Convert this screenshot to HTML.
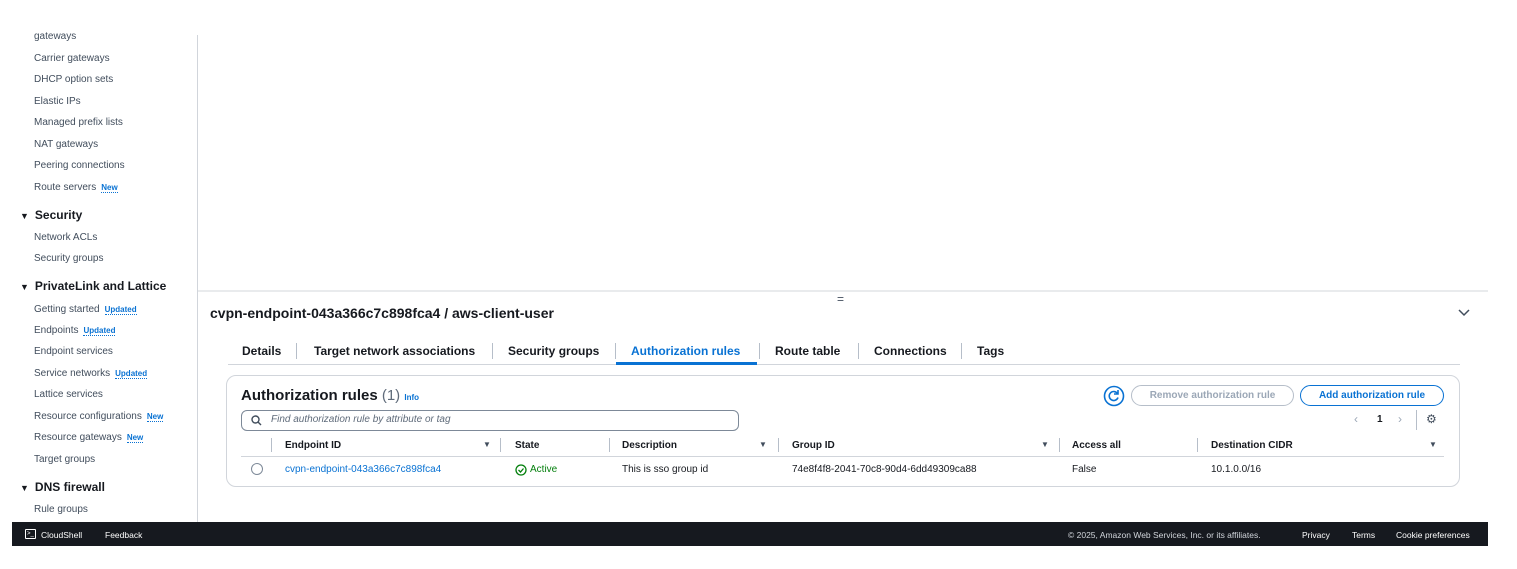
<!DOCTYPE html>
<html><head><meta charset="utf-8"><style>
*{box-sizing:border-box;margin:0;padding:0}
body{width:1517px;height:569px;background:#fff;font-family:"Liberation Sans",sans-serif;color:#16191f;position:relative;overflow:hidden}
.a{position:absolute;white-space:nowrap}
.si{font-size:10px;color:#414d5c;left:34px}
.sh{font-size:12px;font-weight:bold;left:20px;color:#16191f}
.sh i{font-style:normal;font-size:9px;margin-right:6px}
.bd{font-size:8px;font-weight:bold;color:#0972d3;border-bottom:1px dotted #0972d3;margin-left:5px}
.tab{font-size:12px;font-weight:bold;color:#16191f;top:344px}
.th{font-size:10px;font-weight:bold;top:440px;color:#16191f}
.td{font-size:10px;top:464px;color:#16191f}
.sep{position:absolute;width:1px;background:#b6bec9}
.f{font-size:8.5px;color:#fff;top:530px}
.btn{display:flex;align-items:center;justify-content:center;font-size:10px;font-weight:bold;border-radius:11px;height:21px;top:385px}
</style></head><body>
<div class="a si" style="top:31px">gateways</div>
<div class="a si" style="top:53px">Carrier gateways</div>
<div class="a si" style="top:74px">DHCP option sets</div>
<div class="a si" style="top:96px">Elastic IPs</div>
<div class="a si" style="top:117px">Managed prefix lists</div>
<div class="a si" style="top:139px">NAT gateways</div>
<div class="a si" style="top:160px">Peering connections</div>
<div class="a si" style="top:182px">Route servers<span class="bd">New</span></div>
<div class="a sh" style="top:208px"><i>▼</i>Security</div>
<div class="a si" style="top:232px">Network ACLs</div>
<div class="a si" style="top:253px">Security groups</div>
<div class="a sh" style="top:279px"><i>▼</i>PrivateLink and Lattice</div>
<div class="a si" style="top:304px">Getting started<span class="bd">Updated</span></div>
<div class="a si" style="top:325px">Endpoints<span class="bd">Updated</span></div>
<div class="a si" style="top:346px">Endpoint services</div>
<div class="a si" style="top:368px">Service networks<span class="bd">Updated</span></div>
<div class="a si" style="top:389px">Lattice services</div>
<div class="a si" style="top:411px">Resource configurations<span class="bd">New</span></div>
<div class="a si" style="top:432px">Resource gateways<span class="bd">New</span></div>
<div class="a si" style="top:454px">Target groups</div>
<div class="a sh" style="top:480px"><i>▼</i>DNS firewall</div>
<div class="a si" style="top:504px">Rule groups</div>
<div class="a" style="left:197px;top:35px;width:1px;height:487px;background:#d1d5db"></div>
<div class="a" style="left:198px;top:290px;width:1290px;height:2px;background:#e9ebed"></div>
<div class="a" style="left:837px;top:292px;font-size:12px;color:#414d5c">=</div>
<div class="a" style="left:210px;top:305px;font-size:14px;font-weight:bold">cvpn-endpoint-043a366c7c898fca4 / aws-client-user</div>
<svg class="a" style="left:1458px;top:309px" width="12" height="8"><path d="M1 1l5 5 5-5" stroke="#414d5c" stroke-width="1.5" fill="none"/></svg>
<div class="a tab" style="left:242px">Details</div>
<div class="a tab" style="left:314px">Target network associations</div>
<div class="a tab" style="left:508px">Security groups</div>
<div class="a tab" style="left:631px;color:#0972d3">Authorization rules</div>
<div class="a tab" style="left:775px">Route table</div>
<div class="a tab" style="left:874px">Connections</div>
<div class="a tab" style="left:977px">Tags</div>
<div class="sep" style="left:296px;top:343px;height:16px"></div>
<div class="sep" style="left:492px;top:343px;height:16px"></div>
<div class="sep" style="left:615px;top:343px;height:16px"></div>
<div class="sep" style="left:759px;top:343px;height:16px"></div>
<div class="sep" style="left:858px;top:343px;height:16px"></div>
<div class="sep" style="left:961px;top:343px;height:16px"></div>
<div class="a" style="left:228px;top:364px;width:1232px;height:1px;background:#d1d5db"></div>
<div class="a" style="left:616px;top:362px;width:141px;height:3px;background:#0972d3"></div>
<div class="a" style="left:226px;top:375px;width:1234px;height:112px;border:1px solid #d1d5db;border-radius:10px"></div>
<div class="a" style="left:241px;top:387px;font-size:15px;font-weight:bold">Authorization rules <span style="font-weight:normal;color:#5f6b7a">(1)</span> <span style="font-size:8px;color:#0972d3">Info</span></div>
<div class="a" style="left:241px;top:410px;width:498px;height:21px;border:1.5px solid #7d8998;border-radius:6px"></div>
<svg class="a" style="left:251px;top:415px" width="11" height="11"><circle cx="4.5" cy="4.5" r="3.5" stroke="#414d5c" stroke-width="1.4" fill="none"/><path d="M7 7l3 3" stroke="#414d5c" stroke-width="1.4"/></svg>
<div class="a" style="left:271px;top:414px;font-size:10px;font-style:italic;color:#5f6b7a">Find authorization rule by attribute or tag</div>
<svg class="a" style="left:1103px;top:385px" width="22" height="22"><circle cx="11" cy="11" r="9.5" stroke="#0972d3" stroke-width="1.6" fill="none"/><path d="M14.5 8.5a4.5 4.5 0 1 0 0.5 4" stroke="#0972d3" stroke-width="1.6" fill="none"/><path d="M15 5v4h-4" stroke="#0972d3" stroke-width="1.6" fill="none"/></svg>
<div class="a btn" style="left:1131px;width:163px;border:1.5px solid #b6bec9;color:#9ba7b6">Remove authorization rule</div>
<div class="a btn" style="left:1300px;width:144px;border:1.5px solid #0972d3;color:#0972d3">Add authorization rule</div>
<div class="a" style="left:1354px;top:412px;font-size:12px;color:#9ba7b6">‹</div>
<div class="a" style="left:1377px;top:414px;font-size:10px;font-weight:bold">1</div>
<div class="a" style="left:1398px;top:412px;font-size:12px;color:#9ba7b6">›</div>
<div class="sep" style="left:1416px;top:410px;height:20px"></div>
<div class="a" style="left:1426px;top:412px;font-size:12px;color:#414d5c">⚙</div>
<div class="a" style="left:241px;top:456px;width:1203px;height:1px;background:#d1d5db"></div>
<div class="sep" style="left:271px;top:438px;height:14px"></div>
<div class="a th" style="left:285px">Endpoint ID</div><div class="a th" style="left:483px;font-size:8px;color:#414d5c">▼</div>
<div class="sep" style="left:500px;top:438px;height:14px"></div>
<div class="a th" style="left:515px">State</div>
<div class="sep" style="left:609px;top:438px;height:14px"></div>
<div class="a th" style="left:622px">Description</div><div class="a th" style="left:759px;font-size:8px;color:#414d5c">▼</div>
<div class="sep" style="left:778px;top:438px;height:14px"></div>
<div class="a th" style="left:792px">Group ID</div><div class="a th" style="left:1041px;font-size:8px;color:#414d5c">▼</div>
<div class="sep" style="left:1059px;top:438px;height:14px"></div>
<div class="a th" style="left:1072px">Access all</div>
<div class="sep" style="left:1197px;top:438px;height:14px"></div>
<div class="a th" style="left:1211px">Destination CIDR</div><div class="a th" style="left:1429px;font-size:8px;color:#414d5c">▼</div>
<div class="a" style="left:251px;top:463px;width:12px;height:12px;border:1.3px solid #7d8998;border-radius:50%"></div>
<div class="a td" style="left:285px;color:#0972d3">cvpn-endpoint-043a366c7c898fca4</div>
<svg class="a" style="left:515px;top:464px" width="12" height="12"><circle cx="6" cy="6" r="5" stroke="#037f0c" stroke-width="1.3" fill="none"/><path d="M3.5 6l2 2 3-3.5" stroke="#037f0c" stroke-width="1.3" fill="none"/></svg>
<div class="a td" style="left:530px;color:#037f0c">Active</div>
<div class="a td" style="left:622px">This is sso group id</div>
<div class="a td" style="left:792px">74e8f4f8-2041-70c8-90d4-6dd49309ca88</div>
<div class="a td" style="left:1072px">False</div>
<div class="a td" style="left:1211px">10.1.0.0/16</div>
<div class="a" style="left:12px;top:522px;width:1476px;height:24px;background:#16191f"></div>
<div class="a" style="left:25px;top:529px;width:11px;height:10px;border:1px solid #fff;border-radius:1px;font-size:6px;color:#fff;line-height:8px;padding-left:1px">&gt;_</div>
<div class="a f" style="left:41px">CloudShell</div>
<div class="a f" style="left:105px">Feedback</div>
<div class="a f" style="left:1068px;color:#d1d5db">© 2025, Amazon Web Services, Inc. or its affiliates.</div>
<div class="a f" style="left:1302px">Privacy</div>
<div class="a f" style="left:1352px">Terms</div>
<div class="a f" style="left:1396px">Cookie preferences</div>
</body></html>
